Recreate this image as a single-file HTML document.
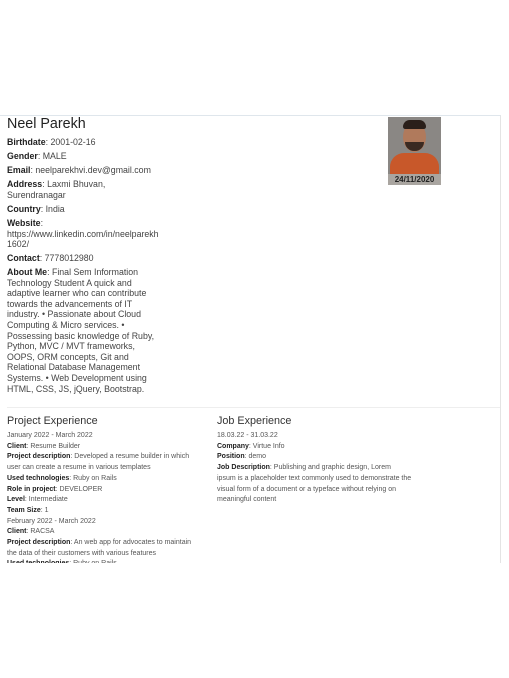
<!DOCTYPE html>
<html><head><style>
body{margin:0;width:509px;height:678px;background:#fff;font-family:"Liberation Sans",sans-serif;color:#333;position:relative;overflow:hidden}
.card{position:absolute;left:0;top:115px;width:500px;height:452px;border-top:1px solid #dfe6ec;border-right:1px solid #e4e4e4}
.a{position:absolute;white-space:nowrap}
h1{position:absolute;left:7px;top:116px;margin:0;font-weight:normal;font-size:14.3px;color:#222}
.p{position:absolute;left:7px;font-size:8.8px;line-height:10.6px;color:#444;white-space:nowrap}
b{color:#222}
.s{font-size:7px;line-height:10.7px;color:#555}
h2{position:absolute;margin:0;font-weight:normal;font-size:10.8px;color:#333}
</style></head><body>
<div class="card"></div>
<h1>Neel Parekh</h1>
<div class="p" style="top:137px"><b>Birthdate</b>: 2001-02-16</div>
<div class="p" style="top:151px"><b>Gender</b>: MALE</div>
<div class="p" style="top:165px"><b>Email</b>: neelparekhvi.dev@gmail.com</div>
<div class="p" style="top:179px"><b>Address</b>: Laxmi Bhuvan,<br>Surendranagar</div>
<div class="p" style="top:204px"><b>Country</b>: India</div>
<div class="p" style="top:218px"><b>Website</b>:<br>https://www.linkedin.com/in/neelparekh<br>1602/</div>
<div class="p" style="top:253px"><b>Contact</b>: 7778012980</div>
<div class="p" style="top:267px"><b>About Me</b>: Final Sem Information<br>Technology Student A quick and<br>adaptive learner who can contribute<br>towards the advancements of IT<br>industry. • Passionate about Cloud<br>Computing &amp; Micro services. •<br>Possessing basic knowledge of Ruby,<br>Python, MVC / MVT frameworks,<br>OOPS, ORM concepts, Git and<br>Relational Database Management<br>Systems. • Web Development using<br>HTML, CSS, JS, jQuery, Bootstrap.</div>
<div class="a" style="left:388px;top:117px;width:53px;height:68px;background:#8a8784;overflow:hidden">
<div style="position:absolute;left:15px;top:5px;width:23px;height:30px;border-radius:50%;background:#b07a5c"></div>
<div style="position:absolute;left:15px;top:3px;width:23px;height:9px;border-radius:12px 12px 4px 4px;background:#2a1f1a"></div>
<div style="position:absolute;left:17px;top:25px;width:19px;height:9px;border-radius:0 0 10px 10px;background:#3a2a22"></div>
<div style="position:absolute;left:2px;top:36px;width:49px;height:32px;border-radius:14px 14px 0 0;background:#c8582a"></div>
<div style="position:absolute;left:0;top:57px;width:53px;height:11px;background:#a9a5a0;font-size:8px;font-weight:bold;color:#222;text-align:center;line-height:11px">24/11/2020</div>
</div>
<div class="a" style="left:7px;top:407px;width:493px;border-top:1px solid #eee"></div>
<h2 style="left:7px;top:415px">Project Experience</h2>
<div class="p s" style="top:431px">January 2022 - March 2022<br><b>Client</b>: Resume Builder<br><b>Project description</b>: Developed a resume builder in which<br>user can create a resume in various templates<br><b>Used technologies</b>: Ruby on Rails<br><b>Role in project</b>: DEVELOPER<br><b>Level</b>: Intermediate<br><b>Team Size</b>: 1<br>February 2022 - March 2022<br><b>Client</b>: RACSA<br><b>Project description</b>: An web app for advocates to maintain<br>the data of their customers with various features<br><b>Used technologies</b>: Ruby on Rails</div>
<div class="a" style="left:0;top:563px;width:509px;height:115px;background:#fff"></div>
<h2 style="left:217px;top:415px">Job Experience</h2>
<div class="p s" style="left:217px;top:431px">18.03.22 - 31.03.22<br><b>Company</b>: Virtue Info<br><b>Position</b>: demo<br><b>Job Description</b>: Publishing and graphic design, Lorem<br>ipsum is a placeholder text commonly used to demonstrate the<br>visual form of a document or a typeface without relying on<br>meaningful content</div>
</body></html>
